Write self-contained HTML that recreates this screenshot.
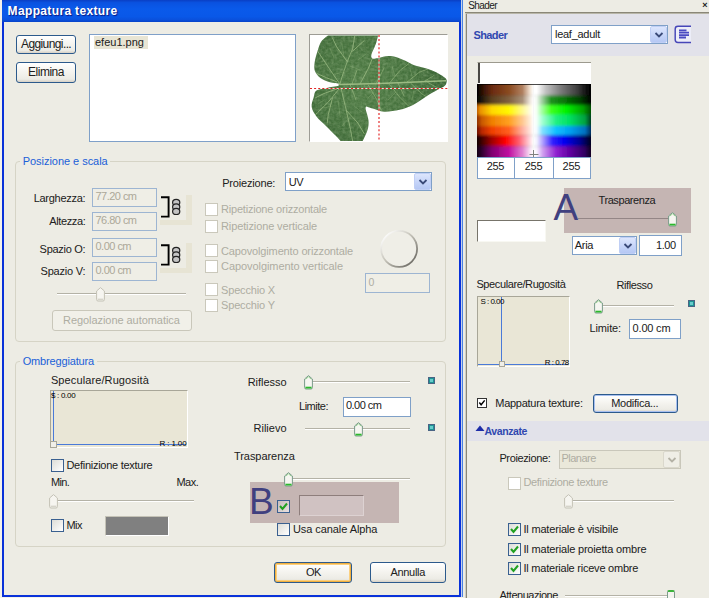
<!DOCTYPE html>
<html><head><meta charset="utf-8"><title>Mappatura texture</title>
<style>
html,body{margin:0;padding:0;}
body{width:709px;height:598px;overflow:hidden;position:relative;background:#EDECE4;font-family:"Liberation Sans",sans-serif;font-size:11px;}
#root{position:absolute;left:0;top:0;width:709px;height:598px;overflow:hidden;}
#root div{position:absolute;box-sizing:border-box;}
#root svg{position:absolute;}
.t{position:absolute;white-space:nowrap;line-height:1;}

.btn{border:1px solid #2C5A8C;border-radius:3px;background:linear-gradient(#fff 0%,#F4F3EE 50%,#ECEBE5 85%,#D6D0C5 100%);}
.inp{border:1px solid #7FA0C8;background:#fff;}
.inpd{border:1px solid #9DB5D2;background:#EFEEE6;}
.cb{border:1px solid #3A6090;background:linear-gradient(135deg,#DCDCD7,#fff);}
.cbd{border:1px solid #CAC8BB;background:#fff;}
.grp{border:1px solid #D6D4C6;border-radius:4px;}

</style></head><body><div id="root">
<div style="left:0px;top:0px;width:2px;height:598px;background:#F4F2EA;"></div>
<div style="left:0px;top:597px;width:464px;height:1px;background:#F4F2EA;"></div>
<div style="left:2px;top:0px;width:460px;height:597px;background:#0831D9;"></div>
<div style="left:4px;top:22px;width:455px;height:573px;background:#EDECE4;"></div>
<div style="left:2px;top:0px;width:460px;height:22px;background:linear-gradient(#0A3FC4 0%,#0A52E0 12%,#0A5AEA 40%,#0958E8 75%,#0A50DC 90%,#0842C8 100%);"></div>
<div style="left:461px;top:0px;width:1px;height:597px;background:#C8D0E8;"></div>
<div style="left:462px;top:0px;width:1px;height:597px;background:#4A82E0;"></div>
<div class="btn" style="left:16px;top:35px;width:60px;height:19px;"></div>
<div class="btn" style="left:16px;top:62px;width:60px;height:21px;"></div>
<div class="inp" style="left:89px;top:34px;width:207px;height:108px;"></div>
<div style="left:94px;top:36px;width:54px;height:13px;background:#E8E5D4;"></div>
<div style="left:309px;top:34px;width:139px;height:108px;background:#fff;border-top:1px solid #9D9C95;border-left:1px solid #9D9C95;border-right:1px solid #fff;border-bottom:1px solid #fff;"></div>
<svg style="left:310px;top:35px" width="138" height="106" viewBox="310 35 138 106">
<defs><radialGradient id="lg" gradientUnits="userSpaceOnUse" cx="365" cy="84" r="80"><stop offset="0" stop-color="#4F7B45"/><stop offset="0.6" stop-color="#44703C"/><stop offset="1" stop-color="#386233"/></radialGradient>
<clipPath id="lc"><path d="M328,35.6 C328.0,35.6 323.1,38.9 321.3,41.5 C319.6,44.1 318.6,47.7 317.5,51.2 C316.4,54.7 315.0,59.4 314.6,62.7 C314.2,66.0 314.0,68.8 315,71.3 C316.0,73.8 317.9,76.2 320.4,78 C322.9,79.8 326.9,81.4 330,82.3 C333.1,83.2 338.7,83.5 338.7,83.5 C338.7,83.5 338.7,85.8 338.7,85.8 C338.7,85.8 331.7,86.9 328,87.7 C324.3,88.5 318.9,89.0 316.5,90.6 C314.1,92.2 314.5,94.6 313.7,97.3 C312.9,100.0 311.2,103.8 311.7,107 C312.2,110.2 314.1,113.3 316.5,116.5 C318.9,119.7 322.8,122.8 326,126 C329.2,129.2 333.4,133.3 335.8,135.8 C338.2,138.3 340.6,141.0 340.6,141 C340.6,141.0 362.7,141.0 362.7,141 C362.7,141.0 366.5,133.4 367.5,130 C368.5,126.6 368.8,123.9 368.5,120.4 C368.2,116.9 365.9,111.1 365.6,108.8 C365.3,106.5 366.5,106.5 366.5,106.5 C366.5,106.5 369.8,107.7 372.7,108.6 C375.6,109.5 379.7,111.5 384.2,111.7 C388.7,111.9 394.8,110.9 399.6,109.8 C404.4,108.7 408.5,107.2 413,105 C417.5,102.8 422.3,98.9 426.5,96.3 C430.7,93.7 434.9,91.3 438,89.6 C441.1,87.8 443.4,87.3 444.8,85.8 C446.2,84.3 446.9,81.9 446.7,80.4 C446.5,78.9 445.6,78.3 443.8,77 C442.1,75.7 439.1,73.7 436.2,72.3 C433.3,70.9 430.0,69.6 426.5,68.5 C423.0,67.4 418.5,66.9 415,65.6 C411.5,64.3 408.6,62.2 405.4,60.8 C402.2,59.4 398.7,57.8 395.8,57 C392.9,56.2 390.9,55.9 388,56 C385.1,56.1 381.1,57.4 378.5,57.9 C375.9,58.4 372.5,58.8 372.5,58.8 C372.5,58.8 370.7,57.5 371.3,55 C371.9,52.5 374.9,46.7 376,43.5 C377.1,40.3 378.0,35.6 378,35.6 C378.0,35.6 328.0,35.6 328,35.6Z"/></clipPath>
<filter id="lt" x="0" y="0" width="100%" height="100%"><feTurbulence type="fractalNoise" baseFrequency="0.35" numOctaves="2" seed="3"/><feColorMatrix values="0 0 0 0 0.75  0 0 0 0 0.9  0 0 0 0 0.6  0.9 0.9 0 0 -0.62"/></filter></defs>
<path d="M328,35.6 C328.0,35.6 323.1,38.9 321.3,41.5 C319.6,44.1 318.6,47.7 317.5,51.2 C316.4,54.7 315.0,59.4 314.6,62.7 C314.2,66.0 314.0,68.8 315,71.3 C316.0,73.8 317.9,76.2 320.4,78 C322.9,79.8 326.9,81.4 330,82.3 C333.1,83.2 338.7,83.5 338.7,83.5 C338.7,83.5 338.7,85.8 338.7,85.8 C338.7,85.8 331.7,86.9 328,87.7 C324.3,88.5 318.9,89.0 316.5,90.6 C314.1,92.2 314.5,94.6 313.7,97.3 C312.9,100.0 311.2,103.8 311.7,107 C312.2,110.2 314.1,113.3 316.5,116.5 C318.9,119.7 322.8,122.8 326,126 C329.2,129.2 333.4,133.3 335.8,135.8 C338.2,138.3 340.6,141.0 340.6,141 C340.6,141.0 362.7,141.0 362.7,141 C362.7,141.0 366.5,133.4 367.5,130 C368.5,126.6 368.8,123.9 368.5,120.4 C368.2,116.9 365.9,111.1 365.6,108.8 C365.3,106.5 366.5,106.5 366.5,106.5 C366.5,106.5 369.8,107.7 372.7,108.6 C375.6,109.5 379.7,111.5 384.2,111.7 C388.7,111.9 394.8,110.9 399.6,109.8 C404.4,108.7 408.5,107.2 413,105 C417.5,102.8 422.3,98.9 426.5,96.3 C430.7,93.7 434.9,91.3 438,89.6 C441.1,87.8 443.4,87.3 444.8,85.8 C446.2,84.3 446.9,81.9 446.7,80.4 C446.5,78.9 445.6,78.3 443.8,77 C442.1,75.7 439.1,73.7 436.2,72.3 C433.3,70.9 430.0,69.6 426.5,68.5 C423.0,67.4 418.5,66.9 415,65.6 C411.5,64.3 408.6,62.2 405.4,60.8 C402.2,59.4 398.7,57.8 395.8,57 C392.9,56.2 390.9,55.9 388,56 C385.1,56.1 381.1,57.4 378.5,57.9 C375.9,58.4 372.5,58.8 372.5,58.8 C372.5,58.8 370.7,57.5 371.3,55 C371.9,52.5 374.9,46.7 376,43.5 C377.1,40.3 378.0,35.6 378,35.6 C378.0,35.6 328.0,35.6 328,35.6Z" fill="url(#lg)"/>
<g clip-path="url(#lc)"><rect x="310" y="35" width="138" height="106" filter="url(#lt)" opacity="0.3"/></g>
<g stroke="#9FBE86" fill="none" stroke-linecap="round" stroke-linejoin="round" clip-path="url(#lc)">
<path d="M339.9,84.6 L380,83.4 L445.7,80.8" stroke-width="1.5" opacity="0.95"/>
<g stroke-width="1" opacity="0.75">
<path d="M339.9,84 Q344,70 347.3,61.7 T352.6,49 L354.7,36"/><path d="M347.3,61.7 L336.7,46.9 L332.5,38"/><path d="M352.6,51.2 L364.2,40.6"/>
<path d="M339.9,84 L330.4,70.2 L321.9,57.5 L317.7,51.2"/><path d="M336.7,81.8 L326.2,77.6 L316.6,73.4"/>
<path d="M360,84 L368.5,68 L372.7,57.5"/>
<path d="M341,88 L346.3,110.4 L350.5,129.4 L352.6,141"/><path d="M346.3,110.4 L357.9,123 L364.2,133.7"/>
<path d="M339.9,88 L328.3,102 L317.7,112.5 L313.5,116.7"/><path d="M332.5,97.7 L328.3,114.6 L327.2,123"/><path d="M336.7,89 L324,93.5 L315.6,97.7"/>
</g>
<g stroke-width="0.9" opacity="0.65">
<path d="M389.6,82.9 L400.2,70.2 L408.7,63.8"/><path d="M406.5,82.5 L419.2,72.3 L427.7,69.1"/><path d="M423.5,81.8 L434,75.5"/>
<path d="M368.5,85.4 L376.9,99.8 L381.2,110.4"/><path d="M389.6,84.6 L400.2,97.7 L408.7,106.2"/><path d="M410.8,83.3 L421.4,93.5 L427.7,97.7"/><path d="M427.7,82.5 L438.3,88.2"/>
<path d="M376,84 L384,68 M398,83 L404,96 M350,84 L356,100 M352,84 L357,70"/>
</g>
<g stroke-width="0.6" opacity="0.5">
<path d="M326,64 L318,66 M334,58 L330,48 M343,72 L336,74 M344,56 L342,44 M358,60 L366,54 M350,66 L360,70 M322,84 L320,80 M333,106 L322,108 M338,100 L340,116 M349,118 L342,126 M354,106 L362,112 M324,100 L318,104 M395,76 L392,66 M412,76 L410,68 M414,90 L412,100 M396,92 L388,100 M430,78 L438,78 M374,92 L368,98"/>
</g>
</g>
<path d="M310 88.5 H448" stroke="#fff" stroke-width="1" opacity="0.8"/>
<path d="M310 88.5 H448" stroke="#E42424" stroke-width="1.15" stroke-dasharray="2 2.1"/>
<path d="M379 35 V141" stroke="#fff" stroke-width="1" opacity="0.8"/>
<path d="M379 35 V141" stroke="#E42424" stroke-width="1.15" stroke-dasharray="2 2.1"/>
</svg>
<div class="grp" style="left:15px;top:161px;width:431px;height:181px;"></div>
<div style="left:20px;top:155px;width:90px;height:12px;background:#EDECE4;"></div>
<div class="inpd" style="left:92px;top:188px;width:65px;height:19px;"></div>
<div class="inpd" style="left:92px;top:212px;width:65px;height:19px;"></div>
<div class="inpd" style="left:92px;top:238px;width:65px;height:19px;"></div>
<div class="inpd" style="left:92px;top:262px;width:65px;height:19px;"></div>
<div style="left:186px;top:195px;width:6px;height:30px;background:#E7E4D4;"></div>
<div style="left:160px;top:220px;width:32px;height:5px;background:#E7E4D4;"></div>
<svg style="left:158px;top:194px" width="28" height="26" viewBox="158 -3 28 26">
<path d="M161 0.2 H168.6 V19.6 H161" stroke="#000" stroke-width="1.9" fill="none"/>
<g fill="#C4C4C4" stroke="#222" stroke-width="1.2"><ellipse cx="176.2" cy="5.4" rx="3.6" ry="3.1"/><ellipse cx="176.2" cy="9.9" rx="3.6" ry="3.1"/><ellipse cx="176.2" cy="14.4" rx="3.6" ry="3.1"/></g></svg>
<div style="left:186px;top:243px;width:6px;height:30px;background:#E7E4D4;"></div>
<div style="left:160px;top:268px;width:32px;height:5px;background:#E7E4D4;"></div>
<svg style="left:158px;top:242.2px" width="28" height="26" viewBox="158 -3 28 26">
<path d="M161 0.2 H168.6 V19.6 H161" stroke="#000" stroke-width="1.9" fill="none"/>
<g fill="#C4C4C4" stroke="#222" stroke-width="1.2"><ellipse cx="176.2" cy="5.4" rx="3.6" ry="3.1"/><ellipse cx="176.2" cy="9.9" rx="3.6" ry="3.1"/><ellipse cx="176.2" cy="14.4" rx="3.6" ry="3.1"/></g></svg>
<div style="left:57px;top:293px;width:129px;height:1px;background:#B4B2A6;"></div>
<div style="left:57px;top:294px;width:129px;height:1px;background:#fff;"></div>
<svg style="left:95.5px;top:286.5px" width="9" height="15" viewBox="0 0 9 15">
<path d="M0.6 4 L4.5 0.6 L8.4 4 V12.6 Q8.4 14 7 14 H2 Q0.6 14 0.6 12.6 Z" fill="#F6F5F0" stroke="#C4C2B6" stroke-width="1"/>
<path d="M1.6 12.4 H7.4" stroke="#D6D4CA" stroke-width="1.6"/></svg>
<div style="left:52px;top:310px;width:140px;height:21px;border:1px solid #C9C7BA;border-radius:3px;background:#F1F0E9;"></div>
<div class="inp" style="left:285px;top:172px;width:147px;height:19px;"></div>
<div style="left:414px;top:173px;width:17px;height:17px;background:linear-gradient(#DDE6FD,#C4D3F8 60%,#B6C8F4);border:1px solid #C0CFF5;border-radius:2px;"></div>
<svg style="left:417.5px;top:177.5px" width="10" height="8" viewBox="0 0 10 8"><path d="M1.5 2 L5 5.5 L8.5 2" stroke="#3A4A78" stroke-width="1.8" fill="none"/></svg>
<div class="cbd" style="left:205px;top:203px;width:13px;height:13px;"></div>
<div class="cbd" style="left:205px;top:220px;width:13px;height:13px;"></div>
<div class="cbd" style="left:205px;top:244px;width:13px;height:13px;"></div>
<div class="cbd" style="left:205px;top:260px;width:13px;height:13px;"></div>
<div class="cbd" style="left:205px;top:283px;width:13px;height:13px;"></div>
<div class="cbd" style="left:205px;top:299px;width:13px;height:13px;"></div>
<svg style="left:378px;top:228px" width="42" height="42" viewBox="378 228 42 42"><defs><linearGradient id="dg" x1="0" y1="0" x2="1" y2="1"><stop offset="0.1" stop-color="#fff"/><stop offset="0.45" stop-color="#C8C6BC"/><stop offset="0.9" stop-color="#6E6C66"/></linearGradient></defs><circle cx="399.1" cy="248.8" r="18" fill="#EFEEE7" stroke="url(#dg)" stroke-width="1.8"/></svg>
<div class="inpd" style="left:365px;top:273px;width:65px;height:20px;"></div>
<div class="grp" style="left:15px;top:361px;width:431px;height:186px;"></div>
<div style="left:20px;top:355px;width:77px;height:12px;background:#EDECE4;"></div>
<div style="left:50px;top:390px;width:138px;height:58px;background:#E9E6D6;border-top:1px solid #A8A698;border-left:1px solid #A8A698;border-right:1px solid #fff;border-bottom:1px solid #fff;"></div>
<div style="left:53px;top:391px;width:1px;height:54px;background:#4A7AD8;"></div>
<div style="left:53px;top:444px;width:133px;height:1px;background:#4A7AD8;"></div>
<div style="left:50px;top:441px;width:7px;height:7px;background:#F0EFE8;border:1px solid #A8A698;"></div>
<div class="cb" style="left:51px;top:459px;width:13px;height:13px;"></div>
<div style="left:52px;top:500px;width:142px;height:1px;background:#B4B2A6;"></div>
<div style="left:52px;top:501px;width:142px;height:1px;background:#fff;"></div>
<svg style="left:49.0px;top:493.5px" width="9" height="15" viewBox="0 0 9 15">
<path d="M0.6 4 L4.5 0.6 L8.4 4 V12.6 Q8.4 14 7 14 H2 Q0.6 14 0.6 12.6 Z" fill="#F6F5F0" stroke="#C4C2B6" stroke-width="1"/>
<path d="M1.6 12.4 H7.4" stroke="#D6D4CA" stroke-width="1.6"/></svg>
<div class="cb" style="left:51px;top:519px;width:13px;height:13px;"></div>
<div style="left:105px;top:516px;width:64px;height:20px;background:#808080;border:1px solid #C4C2B6;border-right-color:#fff;border-bottom-color:#fff;"></div>
<div style="left:305px;top:381px;width:105px;height:1px;background:#B4B2A6;"></div>
<div style="left:305px;top:382px;width:105px;height:1px;background:#fff;"></div>
<svg style="left:303.5px;top:374.5px" width="9" height="15" viewBox="0 0 9 15">
<path d="M0.6 4 L4.5 0.6 L8.4 4 V12.6 Q8.4 14 7 14 H2 Q0.6 14 0.6 12.6 Z" fill="#F6F6F1" stroke="#7A9A8A" stroke-width="1"/>
<path d="M1.4 12.6 H7.6" stroke="#2CB82C" stroke-width="1.8"/>
<path d="M1.6 4.3 L4.5 1.8 L7.4 4.3" stroke="#9CD494" stroke-width="1" fill="none"/></svg>
<div style="left:428px;top:377px;width:7px;height:7px;background:#1E9494;border:1px solid #4A6484;"></div>
<div style="left:430px;top:379px;width:3px;height:3px;background:#68CCCC;"></div>
<div class="inp" style="left:343px;top:397px;width:68px;height:20px;"></div>
<div style="left:305px;top:428px;width:105px;height:1px;background:#B4B2A6;"></div>
<div style="left:305px;top:429px;width:105px;height:1px;background:#fff;"></div>
<svg style="left:353.5px;top:421.5px" width="9" height="15" viewBox="0 0 9 15">
<path d="M0.6 4 L4.5 0.6 L8.4 4 V12.6 Q8.4 14 7 14 H2 Q0.6 14 0.6 12.6 Z" fill="#F6F6F1" stroke="#7A9A8A" stroke-width="1"/>
<path d="M1.4 12.6 H7.6" stroke="#2CB82C" stroke-width="1.8"/>
<path d="M1.6 4.3 L4.5 1.8 L7.4 4.3" stroke="#9CD494" stroke-width="1" fill="none"/></svg>
<div style="left:428px;top:424px;width:7px;height:7px;background:#1E9494;border:1px solid #4A6484;"></div>
<div style="left:430px;top:426px;width:3px;height:3px;background:#68CCCC;"></div>
<div style="left:250px;top:482px;width:149px;height:41px;background:#C5B5B3;"></div>
<div style="left:285px;top:478px;width:125px;height:1px;background:#B4B2A6;"></div>
<div style="left:285px;top:479px;width:125px;height:1px;background:#fff;"></div>
<svg style="left:283.5px;top:471.5px" width="9" height="15" viewBox="0 0 9 15">
<path d="M0.6 4 L4.5 0.6 L8.4 4 V12.6 Q8.4 14 7 14 H2 Q0.6 14 0.6 12.6 Z" fill="#F6F6F1" stroke="#7A9A8A" stroke-width="1"/>
<path d="M1.4 12.6 H7.6" stroke="#2CB82C" stroke-width="1.8"/>
<path d="M1.6 4.3 L4.5 1.8 L7.4 4.3" stroke="#9CD494" stroke-width="1" fill="none"/></svg>
<div class="cb" style="left:277px;top:500px;width:13px;height:13px;background:linear-gradient(135deg,#C8BCBC,#E8E0E0);"></div>
<svg style="left:278px;top:501px" width="11" height="11" viewBox="0 0 11 11"><path d="M2 5 L4.5 8 L9 2.5" stroke="#21A121" stroke-width="2" fill="none"/></svg>
<div style="left:299px;top:495px;width:65px;height:21px;background:#D0C2C2;border-top:1px solid #8E7E7C;border-left:1px solid #8E7E7C;border-right:1px solid #DDD2D2;border-bottom:1px solid #DDD2D2;"></div>
<div class="cb" style="left:277px;top:523px;width:13px;height:13px;"></div>
<div class="btn" style="left:274px;top:562px;width:78px;height:21px;box-shadow:inset 0 0 0 1px #F0B040, inset 0 0 0 2px #FBD080;"></div>
<div class="btn" style="left:370px;top:562px;width:76px;height:21px;"></div>
<div style="left:463px;top:0px;width:246px;height:598px;background:#EDECE4;"></div>
<div style="left:466px;top:13px;width:1px;height:585px;background:#8A8778;"></div>
<div style="left:465px;top:13px;width:1px;height:585px;background:#D0CEC2;"></div>
<div style="left:465px;top:12px;width:244px;height:1px;background:#8A8778;"></div>
<div style="left:466px;top:13px;width:243px;height:1px;background:#B8B6A8;"></div>
<div style="left:467px;top:14px;width:242px;height:42px;background:#E2E2EA;"></div>
<div class="inp" style="left:551px;top:25px;width:117px;height:19px;"></div>
<div style="left:650px;top:26px;width:17px;height:17px;background:linear-gradient(#DDE6FD,#C4D3F8 60%,#B6C8F4);border:1px solid #C0CFF5;border-radius:2px;"></div>
<svg style="left:653.5px;top:30.5px" width="10" height="8" viewBox="0 0 10 8"><path d="M1.5 2 L5 5.5 L8.5 2" stroke="#3A4A78" stroke-width="1.8" fill="none"/></svg>
<svg style="left:673px;top:24px" width="20" height="21" viewBox="673 24 20 21"><path d="M691 26.3 H678 Q675.2 26.3 675.2 29 V39.7 Q675.2 42.4 678 42.4 H691" stroke="#4646B8" stroke-width="1.45" fill="#ECEDF8"/><path d="M679 30.3 H686.5 M679 32.7 H689 M679 35.1 H689 M679 37.5 H686" stroke="#4A4AC2" stroke-width="1.8"/></svg>
<div style="left:477px;top:62px;width:114px;height:22px;background:#fff;border-top:1px solid #9C9A8E;border-left:1px solid #E8E8E0;"></div>
<div style="left:478px;top:63px;width:2px;height:20px;background:#4A4844;"></div>
<svg style="left:477px;top:84px" width="114" height="73" viewBox="477 84 114 73">
<defs><linearGradient id="pl0" gradientUnits="userSpaceOnUse" x1="477.03" y1="0" x2="533.40" y2="0"><stop offset="0.000" stop-color="#000"/><stop offset="0.084" stop-color="#2A0E04"/><stop offset="0.264" stop-color="#6A2A10"/><stop offset="0.565" stop-color="#8A4A20"/><stop offset="0.805" stop-color="#B08060"/><stop offset="0.940" stop-color="#F0E0D0"/><stop offset="1.000" stop-color="#fff"/></linearGradient><linearGradient id="pr0" gradientUnits="userSpaceOnUse" x1="533.40" y1="0" x2="590.94" y2="0"><stop offset="0.000" stop-color="#fff"/><stop offset="0.059" stop-color="#fff"/><stop offset="0.221" stop-color="#C0C0C0"/><stop offset="0.456" stop-color="#808080"/><stop offset="0.750" stop-color="#404040"/><stop offset="0.956" stop-color="#080808"/><stop offset="1.000" stop-color="#000"/></linearGradient><linearGradient id="pl1" gradientUnits="userSpaceOnUse" x1="477.03" y1="0" x2="533.40" y2="0"><stop offset="0.000" stop-color="#000"/><stop offset="0.084" stop-color="#20160A"/><stop offset="0.264" stop-color="#5A4020"/><stop offset="0.565" stop-color="#806040"/><stop offset="0.805" stop-color="#A89078"/><stop offset="0.940" stop-color="#EEE6DC"/><stop offset="1.000" stop-color="#fff"/></linearGradient><linearGradient id="pr1" gradientUnits="userSpaceOnUse" x1="533.40" y1="0" x2="590.94" y2="0"><stop offset="0.000" stop-color="#fff"/><stop offset="0.059" stop-color="#F0F8F0"/><stop offset="0.132" stop-color="#B0D8B0"/><stop offset="0.309" stop-color="#209020"/><stop offset="0.515" stop-color="#087808"/><stop offset="0.809" stop-color="#004000"/><stop offset="1.000" stop-color="#000"/></linearGradient><linearGradient id="pl2" gradientUnits="userSpaceOnUse" x1="477.03" y1="0" x2="533.40" y2="0"><stop offset="0.000" stop-color="#C06000"/><stop offset="0.054" stop-color="#E89000"/><stop offset="0.264" stop-color="#FFD800"/><stop offset="0.565" stop-color="#FFF800"/><stop offset="0.805" stop-color="#FFF890"/><stop offset="0.940" stop-color="#FFFCE0"/><stop offset="1.000" stop-color="#fff"/></linearGradient><linearGradient id="pr2" gradientUnits="userSpaceOnUse" x1="533.40" y1="0" x2="590.94" y2="0"><stop offset="0.000" stop-color="#fff"/><stop offset="0.059" stop-color="#F0FFF0"/><stop offset="0.132" stop-color="#B0FFB0"/><stop offset="0.309" stop-color="#40FF20"/><stop offset="0.574" stop-color="#00F000"/><stop offset="0.868" stop-color="#00A000"/><stop offset="1.000" stop-color="#005000"/></linearGradient><linearGradient id="pl3" gradientUnits="userSpaceOnUse" x1="477.03" y1="0" x2="533.40" y2="0"><stop offset="0.000" stop-color="#903000"/><stop offset="0.084" stop-color="#C85800"/><stop offset="0.264" stop-color="#F08000"/><stop offset="0.565" stop-color="#FFA020"/><stop offset="0.805" stop-color="#FFC890"/><stop offset="0.940" stop-color="#FFECD8"/><stop offset="1.000" stop-color="#fff"/></linearGradient><linearGradient id="pr3" gradientUnits="userSpaceOnUse" x1="533.40" y1="0" x2="590.94" y2="0"><stop offset="0.000" stop-color="#fff"/><stop offset="0.059" stop-color="#F0FFF8"/><stop offset="0.162" stop-color="#A0FFD0"/><stop offset="0.397" stop-color="#20F080"/><stop offset="0.632" stop-color="#00E060"/><stop offset="0.897" stop-color="#00A040"/><stop offset="1.000" stop-color="#004020"/></linearGradient><linearGradient id="pl4" gradientUnits="userSpaceOnUse" x1="477.03" y1="0" x2="533.40" y2="0"><stop offset="0.000" stop-color="#701000"/><stop offset="0.084" stop-color="#B82800"/><stop offset="0.264" stop-color="#F04000"/><stop offset="0.565" stop-color="#FF6020"/><stop offset="0.805" stop-color="#FFB0A0"/><stop offset="0.940" stop-color="#FFE4DC"/><stop offset="1.000" stop-color="#fff"/></linearGradient><linearGradient id="pr4" gradientUnits="userSpaceOnUse" x1="533.40" y1="0" x2="590.94" y2="0"><stop offset="0.000" stop-color="#fff"/><stop offset="0.059" stop-color="#F0FAFF"/><stop offset="0.162" stop-color="#80E0FF"/><stop offset="0.397" stop-color="#10C0FF"/><stop offset="0.632" stop-color="#00A0F0"/><stop offset="0.897" stop-color="#0070C0"/><stop offset="1.000" stop-color="#003060"/></linearGradient><linearGradient id="pl5" gradientUnits="userSpaceOnUse" x1="477.03" y1="0" x2="533.40" y2="0"><stop offset="0.000" stop-color="#100000"/><stop offset="0.084" stop-color="#400000"/><stop offset="0.264" stop-color="#A00000"/><stop offset="0.505" stop-color="#FF0000"/><stop offset="0.745" stop-color="#FF6070"/><stop offset="0.925" stop-color="#FFD0D8"/><stop offset="1.000" stop-color="#fff"/></linearGradient><linearGradient id="pr5" gradientUnits="userSpaceOnUse" x1="533.40" y1="0" x2="590.94" y2="0"><stop offset="0.000" stop-color="#fff"/><stop offset="0.059" stop-color="#F0F0FF"/><stop offset="0.162" stop-color="#B0A0FF"/><stop offset="0.338" stop-color="#3020FF"/><stop offset="0.544" stop-color="#0000F0"/><stop offset="0.809" stop-color="#000090"/><stop offset="1.000" stop-color="#000020"/></linearGradient><linearGradient id="pl6" gradientUnits="userSpaceOnUse" x1="477.03" y1="0" x2="533.40" y2="0"><stop offset="0.000" stop-color="#100010"/><stop offset="0.084" stop-color="#300030"/><stop offset="0.264" stop-color="#800070"/><stop offset="0.565" stop-color="#C010A0"/><stop offset="0.805" stop-color="#E080D0"/><stop offset="0.940" stop-color="#F8E0F4"/><stop offset="1.000" stop-color="#fff"/></linearGradient><linearGradient id="pr6" gradientUnits="userSpaceOnUse" x1="533.40" y1="0" x2="590.94" y2="0"><stop offset="0.000" stop-color="#fff"/><stop offset="0.059" stop-color="#F8F0FF"/><stop offset="0.162" stop-color="#D0A0F0"/><stop offset="0.397" stop-color="#9020D0"/><stop offset="0.632" stop-color="#6000A0"/><stop offset="0.897" stop-color="#300060"/><stop offset="1.000" stop-color="#100020"/></linearGradient><filter id="vb" x="-5%" y="-10%" width="110%" height="120%"><feGaussianBlur stdDeviation="0.6 1.6"/></filter><clipPath id="pc"><rect x="477" y="84" width="114" height="73"/></clipPath></defs>
<rect x="477" y="84" width="114" height="73" fill="#000"/>
<g clip-path="url(#pc)"><g filter="url(#vb)"><rect x="476.73" y="81.54" width="56.96" height="14.30" fill="url(#pl0)"/><rect x="533.10" y="81.54" width="58.15" height="14.30" fill="url(#pr0)"/><rect x="476.73" y="95.54" width="56.96" height="9.61" fill="url(#pl1)"/><rect x="533.10" y="95.54" width="58.15" height="9.61" fill="url(#pr1)"/><rect x="476.73" y="104.85" width="56.96" height="10.46" fill="url(#pl2)"/><rect x="533.10" y="104.85" width="58.15" height="10.46" fill="url(#pr2)"/><rect x="476.73" y="115.01" width="56.96" height="11.30" fill="url(#pl3)"/><rect x="533.10" y="115.01" width="58.15" height="11.30" fill="url(#pr3)"/><rect x="476.73" y="126.01" width="56.96" height="9.61" fill="url(#pl4)"/><rect x="533.10" y="126.01" width="58.15" height="9.61" fill="url(#pr4)"/><rect x="476.73" y="135.32" width="56.96" height="11.30" fill="url(#pl5)"/><rect x="533.10" y="135.32" width="58.15" height="11.30" fill="url(#pr5)"/><rect x="476.73" y="146.32" width="56.96" height="13.12" fill="url(#pl6)"/><rect x="533.10" y="146.32" width="58.15" height="13.12" fill="url(#pr6)"/></g></g>
<rect x="477" y="84" width="114" height="1" fill="#000" opacity="0.7"/>
<path d="M529.5 154.5 H538.5 M533.5 150 V158" stroke="#808080" stroke-width="1"/>
</svg>
<div class="inp" style="left:477px;top:157px;width:38px;height:22px;"></div>
<div class="inp" style="left:514px;top:157px;width:40px;height:22px;"></div>
<div class="inp" style="left:553px;top:157px;width:38px;height:22px;"></div>
<div style="left:564px;top:188px;width:127px;height:45px;background:#C5B5B3;"></div>
<div style="left:578px;top:218px;width:97px;height:1px;background:#948686;"></div>
<div style="left:578px;top:218px;width:0px;height:1px;background:#B4B2A6;"></div>
<div style="left:578px;top:219px;width:0px;height:1px;background:#fff;"></div>
<svg style="left:667.5px;top:211.5px" width="9" height="15" viewBox="0 0 9 15">
<path d="M0.6 4 L4.5 0.6 L8.4 4 V12.6 Q8.4 14 7 14 H2 Q0.6 14 0.6 12.6 Z" fill="#F6F6F1" stroke="#7A9A8A" stroke-width="1"/>
<path d="M1.4 12.6 H7.6" stroke="#2CB82C" stroke-width="1.8"/>
<path d="M1.6 4.3 L4.5 1.8 L7.4 4.3" stroke="#9CD494" stroke-width="1" fill="none"/></svg>
<div style="left:477px;top:220px;width:69px;height:22px;background:#fff;border-top:1px solid #77746A;border-left:1px solid #77746A;border-right:1px solid #F8F8F2;border-bottom:1px solid #F8F8F2;"></div>
<div class="inp" style="left:572px;top:236px;width:65px;height:19px;"></div>
<div style="left:619px;top:237px;width:17px;height:17px;background:linear-gradient(#DDE6FD,#C4D3F8 60%,#B6C8F4);border:1px solid #C0CFF5;border-radius:2px;"></div>
<svg style="left:622.5px;top:241.5px" width="10" height="8" viewBox="0 0 10 8"><path d="M1.5 2 L5 5.5 L8.5 2" stroke="#3A4A78" stroke-width="1.8" fill="none"/></svg>
<div class="inp" style="left:639px;top:235px;width:43px;height:21px;"></div>
<div style="left:477px;top:296px;width:93px;height:71px;background:#E9E6D6;border-top:1px solid #A8A698;border-left:1px solid #A8A698;border-right:1px solid #fff;border-bottom:1px solid #fff;"></div>
<div style="left:501px;top:297px;width:1px;height:67px;background:#4A7AD8;"></div>
<div style="left:478px;top:364px;width:90px;height:1px;background:#4A7AD8;"></div>
<div style="left:499px;top:361px;width:6px;height:6px;background:#F0EFE8;border:1px solid #A8A698;"></div>
<div style="left:595px;top:305px;width:79px;height:1px;background:#B4B2A6;"></div>
<div style="left:595px;top:306px;width:79px;height:1px;background:#fff;"></div>
<svg style="left:593.5px;top:298.5px" width="9" height="15" viewBox="0 0 9 15">
<path d="M0.6 4 L4.5 0.6 L8.4 4 V12.6 Q8.4 14 7 14 H2 Q0.6 14 0.6 12.6 Z" fill="#F6F6F1" stroke="#7A9A8A" stroke-width="1"/>
<path d="M1.4 12.6 H7.6" stroke="#2CB82C" stroke-width="1.8"/>
<path d="M1.6 4.3 L4.5 1.8 L7.4 4.3" stroke="#9CD494" stroke-width="1" fill="none"/></svg>
<div style="left:688px;top:300px;width:7px;height:7px;background:#1E9494;border:1px solid #4A6484;"></div>
<div style="left:690px;top:302px;width:3px;height:3px;background:#68CCCC;"></div>
<div class="inp" style="left:629px;top:319px;width:52px;height:20px;"></div>
<div style="left:477px;top:398px;width:10px;height:10px;background:#fff;border:1px solid #333;"></div>
<svg style="left:478px;top:399px" width="8" height="8" viewBox="0 0 9 9"><path d="M1.5 4 L3.5 6.5 L7.5 1.5" stroke="#000" stroke-width="1.6" fill="none"/></svg>
<div class="btn" style="left:593px;top:394px;width:85px;height:19px;box-shadow:inset 0 0 0 1px #A8C0F0;"></div>
<div style="left:467px;top:421px;width:242px;height:20px;background:#E2E2EA;"></div>
<svg style="left:475px;top:424px" width="10" height="8" viewBox="0 0 10 8"><path d="M0.5 7 L5 1.5 L9.5 7 Z" fill="#1C2CA8"/></svg>
<div style="left:559px;top:450px;width:122px;height:19px;border:1px solid #C9C7BA;background:#EAE8DA;"></div>
<div style="left:663px;top:451px;width:17px;height:17px;background:#EFEEE6;border:1px solid #DAD8CC;border-radius:2px;"></div>
<svg style="left:666.5px;top:455.5px" width="10" height="8" viewBox="0 0 10 8"><path d="M1.5 2 L5 5.5 L8.5 2" stroke="#B4B2A6" stroke-width="1.8" fill="none"/></svg>
<div class="cbd" style="left:508px;top:477px;width:13px;height:13px;"></div>
<div style="left:565px;top:500px;width:109px;height:1px;background:#B4B2A6;"></div>
<div style="left:565px;top:501px;width:109px;height:1px;background:#fff;"></div>
<svg style="left:563.5px;top:493.5px" width="9" height="15" viewBox="0 0 9 15">
<path d="M0.6 4 L4.5 0.6 L8.4 4 V12.6 Q8.4 14 7 14 H2 Q0.6 14 0.6 12.6 Z" fill="#F6F5F0" stroke="#C4C2B6" stroke-width="1"/>
<path d="M1.6 12.4 H7.4" stroke="#D6D4CA" stroke-width="1.6"/></svg>
<div class="cb" style="left:508px;top:523px;width:13px;height:13px;"></div>
<svg style="left:509px;top:524px" width="11" height="11" viewBox="0 0 11 11"><path d="M2 5 L4.5 8 L9 2.5" stroke="#21A121" stroke-width="2" fill="none"/></svg>
<div class="cb" style="left:508px;top:543px;width:13px;height:13px;"></div>
<svg style="left:509px;top:544px" width="11" height="11" viewBox="0 0 11 11"><path d="M2 5 L4.5 8 L9 2.5" stroke="#21A121" stroke-width="2" fill="none"/></svg>
<div class="cb" style="left:508px;top:562px;width:13px;height:13px;"></div>
<svg style="left:509px;top:563px" width="11" height="11" viewBox="0 0 11 11"><path d="M2 5 L4.5 8 L9 2.5" stroke="#21A121" stroke-width="2" fill="none"/></svg>
<div style="left:565px;top:595px;width:104px;height:1px;background:#B4B2A6;"></div>
<div style="left:565px;top:596px;width:104px;height:1px;background:#fff;"></div>
<div style="left:667px;top:590px;width:8px;height:10px;background:#F4F4EF;border:1px solid #7E9C8C;border-top:2px solid #3CB43C;border-radius:2px 2px 0 0;"></div>
<span class="t" style="left:7.6px;top:4.54px;font-size:12px;color:#fff;font-weight:bold;letter-spacing:0.352px;text-shadow:1px 1px 1px #0A1883;">Mappatura texture</span>
<span class="t" style="left:21px;top:37.84px;font-size:12px;color:#202020;letter-spacing:-0.600px;">Aggiungi...</span>
<span class="t" style="left:28px;top:65.84px;font-size:12px;color:#202020;letter-spacing:-0.478px;">Elimina</span>
<span class="t" style="left:95px;top:37.19px;font-size:11px;color:#202020;letter-spacing:0.007px;">efeu1.png</span>
<span class="t" style="left:22.7px;top:155.69px;font-size:11px;color:#2060D8;letter-spacing:-0.036px;">Posizione e scala</span>
<span class="t" style="left:33.7px;top:192.69px;font-size:11px;color:#202020;letter-spacing:-0.283px;">Larghezza:</span>
<span class="t" style="left:49.3px;top:216.29px;font-size:11px;color:#202020;letter-spacing:-0.391px;">Altezza:</span>
<span class="t" style="left:39.6px;top:243.69px;font-size:11px;color:#202020;letter-spacing:-0.289px;">Spazio O:</span>
<span class="t" style="left:40.5px;top:265.69px;font-size:11px;color:#202020;letter-spacing:-0.208px;">Spazio V:</span>
<span class="t" style="left:95.5px;top:191.49px;font-size:11px;color:#ACA899;letter-spacing:-0.531px;">77.20 cm</span>
<span class="t" style="left:95.5px;top:215.49px;font-size:11px;color:#ACA899;letter-spacing:-0.531px;">76.80 cm</span>
<span class="t" style="left:95.5px;top:241.49px;font-size:11px;color:#ACA899;letter-spacing:-0.518px;">0.00 cm</span>
<span class="t" style="left:95.5px;top:265.49px;font-size:11px;color:#ACA899;letter-spacing:-0.518px;">0.00 cm</span>
<span class="t" style="left:63px;top:315.39px;font-size:11px;color:#AEADA2;letter-spacing:-0.055px;">Regolazione automatica</span>
<span class="t" style="left:222.2px;top:177.89px;font-size:11px;color:#202020;letter-spacing:-0.185px;">Proiezione:</span>
<span class="t" style="left:288.7px;top:176.69px;font-size:11px;color:#202020;letter-spacing:-0.290px;">UV</span>
<span class="t" style="left:221px;top:203.69px;font-size:11px;color:#AEADA2;letter-spacing:-0.203px;">Ripetizione orizzontale</span>
<span class="t" style="left:221px;top:221.29px;font-size:11px;color:#AEADA2;letter-spacing:-0.116px;">Ripetizione verticale</span>
<span class="t" style="left:221px;top:245.69px;font-size:11px;color:#AEADA2;letter-spacing:-0.144px;">Capovolgimento orizzontale</span>
<span class="t" style="left:221px;top:261.29px;font-size:11px;color:#AEADA2;letter-spacing:-0.063px;">Capovolgimento verticale</span>
<span class="t" style="left:221px;top:284.69px;font-size:11px;color:#AEADA2;letter-spacing:-0.164px;">Specchio X</span>
<span class="t" style="left:221px;top:300.49px;font-size:11px;color:#AEADA2;letter-spacing:-0.164px;">Specchio Y</span>
<span class="t" style="left:368.5px;top:276.91px;font-size:10.5px;color:#AEADA2;">0</span>
<span class="t" style="left:22.7px;top:355.69px;font-size:11px;color:#2060D8;letter-spacing:-0.159px;">Ombreggiatura</span>
<span class="t" style="left:50.9px;top:374.99px;font-size:11px;color:#202020;letter-spacing:0.111px;">Speculare/Rugosità</span>
<span class="t" style="left:50.9px;top:392.23px;font-size:8px;color:#000;letter-spacing:-0.273px;">$ : 0.00</span>
<span class="t" style="left:159.5px;top:440.23px;font-size:8px;color:#000;letter-spacing:-0.127px;">R : 1.00</span>
<span class="t" style="left:66.4px;top:459.99px;font-size:11px;color:#202020;letter-spacing:-0.269px;">Definizione texture</span>
<span class="t" style="left:50.9px;top:476.89px;font-size:11px;color:#202020;letter-spacing:-0.600px;">Min.</span>
<span class="t" style="left:176.4px;top:476.89px;font-size:11px;color:#202020;letter-spacing:-0.459px;">Max.</span>
<span class="t" style="left:66.4px;top:520.49px;font-size:11px;color:#202020;letter-spacing:-0.536px;">Mix</span>
<span class="t" style="left:247.7px;top:376.89px;font-size:11px;color:#202020;letter-spacing:-0.015px;">Riflesso</span>
<span class="t" style="left:299px;top:400.69px;font-size:11px;color:#202020;letter-spacing:-0.485px;">Limite:</span>
<span class="t" style="left:346px;top:400.19px;font-size:11px;color:#202020;letter-spacing:-0.547px;">0.00 cm</span>
<span class="t" style="left:253.5px;top:423.39px;font-size:11px;color:#202020;letter-spacing:-0.002px;">Rilievo</span>
<span class="t" style="left:234px;top:450.99px;font-size:11px;color:#202020;letter-spacing:-0.058px;">Trasparenza</span>
<span class="t" style="left:249px;top:483.18px;font-size:37px;color:#40407F;">B</span>
<span class="t" style="left:293px;top:523.99px;font-size:11px;color:#202020;letter-spacing:-0.076px;">Usa canale Alpha</span>
<span class="t" style="left:306px;top:566.89px;font-size:11px;color:#202020;letter-spacing:-0.600px;">OK</span>
<span class="t" style="left:390.4px;top:566.89px;font-size:11px;color:#202020;letter-spacing:-0.285px;">Annulla</span>
<span class="t" style="left:468.3px;top:0.84px;font-size:10px;color:#202020;letter-spacing:-0.600px;">Shader</span>
<span class="t" style="left:702.3px;top:1.38px;font-size:9px;color:#202020;font-weight:bold;">×</span>
<span class="t" style="left:473.4px;top:30.09px;font-size:11px;color:#3048B0;font-weight:bold;letter-spacing:-0.600px;">Shader</span>
<span class="t" style="left:555px;top:29.19px;font-size:11px;color:#202020;letter-spacing:-0.271px;">leaf_adult</span>
<span class="t" style="left:486.7px;top:160.69px;font-size:11px;color:#202020;letter-spacing:-0.318px;">255</span>
<span class="t" style="left:524.8px;top:160.69px;font-size:11px;color:#202020;letter-spacing:-0.318px;">255</span>
<span class="t" style="left:562.6px;top:160.69px;font-size:11px;color:#202020;letter-spacing:-0.318px;">255</span>
<span class="t" style="left:553.6px;top:189.28px;font-size:37px;color:#40407F;">A</span>
<span class="t" style="left:598.5px;top:194.99px;font-size:11px;color:#202020;letter-spacing:-0.413px;">Trasparenza</span>
<span class="t" style="left:574.8px;top:240.09px;font-size:11px;color:#202020;letter-spacing:-0.290px;">Aria</span>
<span class="t" style="left:656px;top:239.99px;font-size:11px;color:#202020;letter-spacing:-0.452px;">1.00</span>
<span class="t" style="left:476.4px;top:279.09px;font-size:11px;color:#202020;letter-spacing:-0.389px;">Speculare/Rugosità</span>
<span class="t" style="left:480.5px;top:297.83px;font-size:8px;color:#000;letter-spacing:-0.522px;">S : 0.00</span>
<span class="t" style="left:544.8px;top:359.23px;font-size:8px;color:#000;letter-spacing:-0.502px;">R : 0.78</span>
<span class="t" style="left:616.4px;top:280.09px;font-size:11px;color:#202020;letter-spacing:-0.390px;">Riflesso</span>
<span class="t" style="left:589.6px;top:323.49px;font-size:11px;color:#202020;letter-spacing:-0.157px;">Limite:</span>
<span class="t" style="left:632.6px;top:322.99px;font-size:11px;color:#202020;letter-spacing:-0.190px;">0.00 cm</span>
<span class="t" style="left:495.3px;top:398.29px;font-size:11px;color:#202020;letter-spacing:-0.274px;">Mappatura texture:</span>
<span class="t" style="left:611.2px;top:398.09px;font-size:11px;color:#202020;letter-spacing:-0.266px;">Modifica...</span>
<span class="t" style="left:484.6px;top:425.71px;font-size:10.5px;color:#3048B0;font-weight:bold;letter-spacing:-0.414px;">Avanzate</span>
<span class="t" style="left:499.4px;top:453.49px;font-size:11px;color:#202020;letter-spacing:-0.367px;">Proiezione:</span>
<span class="t" style="left:561.4px;top:453.49px;font-size:11px;color:#AEADA2;letter-spacing:-0.502px;">Planare</span>
<span class="t" style="left:523.5px;top:477.09px;font-size:11px;color:#AEADA2;letter-spacing:-0.358px;">Definizione texture</span>
<span class="t" style="left:523.5px;top:524.49px;font-size:11px;color:#202020;letter-spacing:-0.193px;">Il materiale è visibile</span>
<span class="t" style="left:523.5px;top:543.99px;font-size:11px;color:#202020;letter-spacing:-0.184px;">Il materiale proietta ombre</span>
<span class="t" style="left:523.5px;top:563.39px;font-size:11px;color:#202020;letter-spacing:-0.233px;">Il materiale riceve ombre</span>
<span class="t" style="left:499.4px;top:590.29px;font-size:11px;color:#202020;letter-spacing:-0.476px;">Attenuazione</span>
</div></body></html>
